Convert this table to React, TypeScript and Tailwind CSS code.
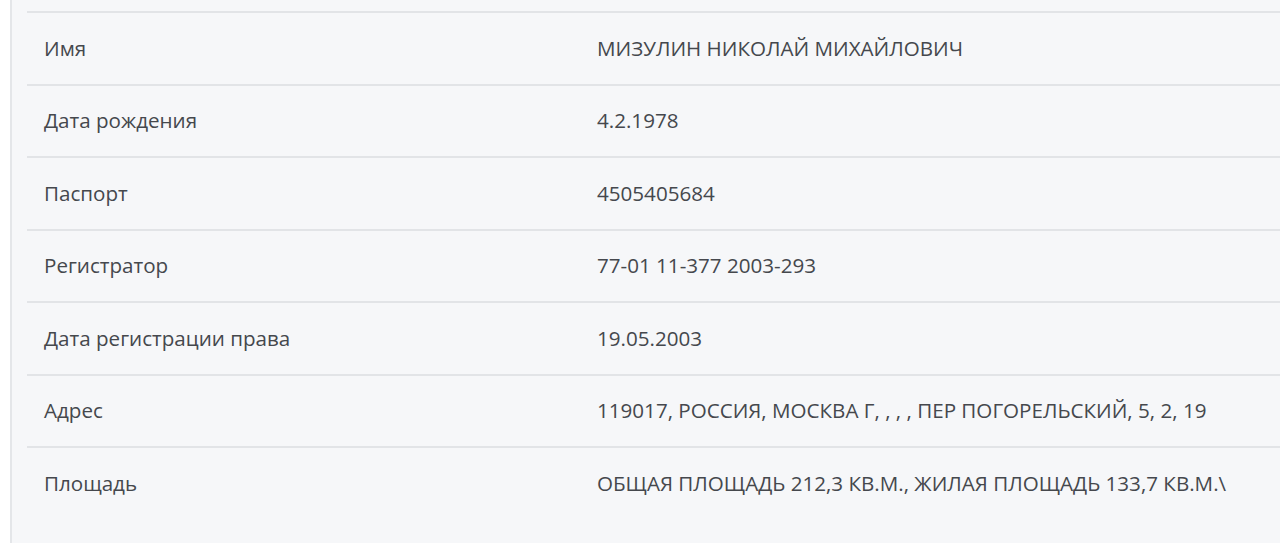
import React from 'react'

const rows: [string, string][] = [
  ['Имя', 'МИЗУЛИН НИКОЛАЙ МИХАЙЛОВИЧ'],
  ['Дата рождения', '4.2.1978'],
  ['Паспорт', '4505405684'],
  ['Регистратор', '77-01 11-377 2003-293'],
  ['Дата регистрации права', '19.05.2003'],
  ['Адрес', '119017, РОССИЯ, МОСКВА Г, , , , ПЕР ПОГОРЕЛЬСКИЙ, 5, 2, 19'],
  ['Площадь', 'ОБЩАЯ ПЛОЩАДЬ 212,3 КВ.М., ЖИЛАЯ ПЛОЩАДЬ 133,7 КВ.М.\\'],
]

export default function App() {
  return (
    <div
      className="h-[543px] w-[1280px] overflow-hidden bg-white pl-[10px]"
      style={{ fontFamily: '"Open Sans", "Noto Sans", sans-serif' }}
    >
      <div className="h-full border-l-2 border-[#e4e6e9] bg-[#f6f7f9] pl-[15px] pt-[11px]">
        {rows.map(([label, value]) => (
          <div
            key={label}
            className="box-border flex h-[72.5px] items-center border-t-2 border-[#e2e4e7] text-[20.6px] text-[#45484d]"
          >
            <div className="w-[570px] shrink-0 pl-[17px]">{label}</div>
            <div className="whitespace-nowrap">{value}</div>
          </div>
        ))}
      </div>
    </div>
  )
}
